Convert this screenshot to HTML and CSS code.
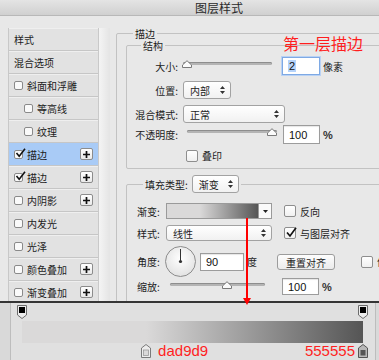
FILE: index.html
```html
<!DOCTYPE html>
<html lang="zh-CN">
<head>
    <meta charset="UTF-8">
    <meta name="viewport" content="width=device-width, initial-scale=1.0">
    <title>图层样式</title>
    <link rel="stylesheet" href="styles.css">
</head>
<body>
<div class="dialog">
    <div class="titlebar">图层样式</div>

    <div class="main">
        <div class="sidebar">
            <ul class="style-list">
                <li class="item">样式</li>
                <li class="item">混合选项</li>
                <li class="item"><span class="box"></span>斜面和浮雕</li>
                <li class="item sub"><span class="box"></span>等高线</li>
                <li class="item sub"><span class="box"></span>纹理</li>
                <li class="item active">
                    <span class="box checked"><svg width="11" height="10" viewBox="0 0 11 10"><polyline points="1.5,5 4.2,8.2 10,0.8" fill="none" stroke="#111" stroke-width="1.6"/></svg></span>描边
                    <span class="plus"><svg width="7" height="7" viewBox="0 0 7 7"><path d="M3.5 0v7M0 3.5h7" stroke="#111" stroke-width="1.7"/></svg></span>
                </li>
                <li class="item">
                    <span class="box checked"><svg width="11" height="10" viewBox="0 0 11 10"><polyline points="1.5,5 4.2,8.2 10,0.8" fill="none" stroke="#111" stroke-width="1.6"/></svg></span>描边
                    <span class="plus"><svg width="7" height="7" viewBox="0 0 7 7"><path d="M3.5 0v7M0 3.5h7" stroke="#111" stroke-width="1.7"/></svg></span>
                </li>
                <li class="item">
                    <span class="box"></span>内阴影
                    <span class="plus"><svg width="7" height="7" viewBox="0 0 7 7"><path d="M3.5 0v7M0 3.5h7" stroke="#111" stroke-width="1.7"/></svg></span>
                </li>
                <li class="item"><span class="box"></span>内发光</li>
                <li class="item"><span class="box"></span>光泽</li>
                <li class="item">
                    <span class="box"></span>颜色叠加
                    <span class="plus"><svg width="7" height="7" viewBox="0 0 7 7"><path d="M3.5 0v7M0 3.5h7" stroke="#111" stroke-width="1.7"/></svg></span>
                </li>
                <li class="item">
                    <span class="box"></span>渐变叠加
                    <span class="plus"><svg width="7" height="7" viewBox="0 0 7 7"><path d="M3.5 0v7M0 3.5h7" stroke="#111" stroke-width="1.7"/></svg></span>
                </li>
            </ul>
            <div class="scroll"></div>
        </div>

        <div class="panel">
            <div class="group group-outer">
                <div class="legend">描边</div>

                <div class="group group-inner">
                    <div class="legend">结构</div>

                    <div class="field">
                        <span class="label">大小:</span>
                        <div class="slider slider-size">
                            <div class="track"></div>
                            <svg class="handle" style="left:0%" width="10" height="8" viewBox="0 0 10 8"><path d="M0.5 7.5V5L5 0.7L9.5 5V7.5Z" fill="#fbfbfb" stroke="#7a7a7a"/></svg>
                        </div>
                        <div class="num num-focus"><span class="sel">2</span></div>
                        <span class="unit">像素</span>
                    </div>

                    <div class="field">
                        <span class="label">位置:</span>
                        <div class="select select-pos">内部
                            <svg width="5" height="8" viewBox="0 0 5 8"><path d="M0 3L2.5 0L5 3ZM0 5L2.5 8L5 5Z" fill="#333"/></svg>
                        </div>
                    </div>

                    <div class="field">
                        <span class="label">混合模式:</span>
                        <div class="select select-blend">正常
                            <svg width="5" height="8" viewBox="0 0 5 8"><path d="M0 3L2.5 0L5 3ZM0 5L2.5 8L5 5Z" fill="#333"/></svg>
                        </div>
                    </div>

                    <div class="field field-opacity">
                        <span class="label">不透明度:</span>
                        <div class="slider slider-opacity">
                            <div class="track"></div>
                            <svg class="handle" style="left:100%" width="10" height="8" viewBox="0 0 10 8"><path d="M0.5 7.5V5L5 0.7L9.5 5V7.5Z" fill="#fbfbfb" stroke="#7a7a7a"/></svg>
                        </div>
                        <div class="num num-opacity">100</div>
                        <span class="unit pct">%</span>
                    </div>

                    <div class="field field-overprint">
                        <span class="label"></span>
                        <span class="check"></span>
                        <span class="check-text">叠印</span>
                    </div>
                </div>

                <div class="group group-fill">
                    <div class="legend legend-fill">
                        <span>填充类型:</span>
                        <div class="select select-fill">渐变
                            <svg width="5" height="8" viewBox="0 0 5 8"><path d="M0 3L2.5 0L5 3ZM0 5L2.5 8L5 5Z" fill="#333"/></svg>
                        </div>
                    </div>

                    <div class="field field-gradient">
                        <span class="label">渐变:</span>
                        <div class="grad-picker">
                            <div class="grad-swatch"></div>
                            <div class="grad-drop"><svg width="5" height="3" viewBox="0 0 5 3"><path d="M0 0H5L2.5 3Z" fill="#222"/></svg></div>
                        </div>
                        <span class="check check-fill"></span>
                        <span class="check-text">反向</span>
                    </div>

                    <div class="field field-style">
                        <span class="label">样式:</span>
                        <div class="select select-style">线性
                            <svg width="5" height="8" viewBox="0 0 5 8"><path d="M0 3L2.5 0L5 3ZM0 5L2.5 8L5 5Z" fill="#333"/></svg>
                        </div>
                        <span class="check check-fill"><svg width="12" height="11" viewBox="0 0 12 11"><polyline points="2,5.5 5,9 11,0.8" fill="none" stroke="#111" stroke-width="1.7"/></svg></span>
                        <span class="check-text">与图层对齐</span>
                    </div>

                    <div class="field field-angle">
                        <span class="label">角度:</span>
                        <svg class="dial" width="31" height="31" viewBox="0 0 31 31">
                            <defs>
                                <radialGradient id="dialFill" cx="50%" cy="40%" r="60%">
                                    <stop offset="0" stop-color="#ffffff"/>
                                    <stop offset="1" stop-color="#e2e2e2"/>
                                </radialGradient>
                            </defs>
                            <circle cx="15.5" cy="15.5" r="15" fill="url(#dialFill)" stroke="#8c8c8c"/>
                            <line x1="15.5" y1="15.5" x2="15.5" y2="3" stroke="#333" stroke-width="1"/>
                            <circle cx="15.5" cy="15.5" r="1.6" fill="#333"/>
                        </svg>
                        <div class="num num-angle">90</div>
                        <span class="unit">度</span>
                        <button type="button" class="btn">重置对齐</button>
                        <span class="check check-dither"></span>
                        <span class="check-text">仿色</span>
                    </div>

                    <div class="field field-scale">
                        <span class="label">缩放:</span>
                        <div class="slider slider-scale">
                            <div class="track"></div>
                            <svg class="handle" style="left:56%" width="10" height="8" viewBox="0 0 10 8"><path d="M0.5 7.5V5L5 0.7L9.5 5V7.5Z" fill="#fbfbfb" stroke="#7a7a7a"/></svg>
                        </div>
                        <div class="num num-scale">100</div>
                        <span class="unit pct">%</span>
                    </div>
                </div>
            </div>
        </div>
    </div>

    <div class="editor">
        <div class="editor-body">
            <div class="stops">
                <svg class="stop" style="left:0%" width="10" height="14" viewBox="0 0 10 14"><path d="M0.5 0.5H9.5V10L5 13.5L0.5 10Z" fill="#ececec" stroke="#6c6c6c"/><rect x="2" y="2" width="6" height="6" fill="#000"/></svg>
                <svg class="stop" style="left:100%" width="10" height="14" viewBox="0 0 10 14"><path d="M0.5 0.5H9.5V10L5 13.5L0.5 10Z" fill="#ececec" stroke="#6c6c6c"/><rect x="2" y="2" width="6" height="6" fill="#000"/></svg>
            </div>
            <div class="grad-bar"></div>
            <div class="stops">
                <div class="color-stop" style="left:36.4%">
                    <svg width="10" height="14" viewBox="0 0 10 14"><path d="M0.5 4L5 0.5L9.5 4V13.5H0.5Z" fill="#ececec" stroke="#7a7a7a"/><rect x="2.5" y="6" width="5" height="5.5" fill="#dad9d9" stroke="#9a9a9a" stroke-width="0.8"/></svg>
                    <span class="hex">dad9d9</span>
                </div>
                <div class="color-stop color-stop-end">
                    <span class="hex">555555</span>
                    <svg width="10" height="14" viewBox="0 0 10 14"><path d="M0.5 4L5 0.5L9.5 4V13.5H0.5Z" fill="#b8b8b8" stroke="#555"/><rect x="2.5" y="6" width="5" height="5.5" fill="#555"/></svg>
                </div>
            </div>
        </div>
    </div>

    <div class="note">第一层描边</div>
    <div class="arrow"></div>
</div>
</body>
</html>
```

FILE: styles.css
```css
body {
    margin: 0;
    width: 379px;
    height: 360px;
    overflow: hidden;
    background: #e8e8e8;
    font-family: "Noto Sans CJK SC", sans-serif;
    font-size: 10px;
    color: #1c1c1c;
}
.dialog {
    position: relative;
    height: 360px;
}
.titlebar {
    height: 15px;
    line-height: 15px;
    padding-left: 195px;
    font-size: 12px;
    color: #2a2a2a;
    background: linear-gradient(#e4e4e4, #d0d0d0);
    border-bottom: 1px solid #b8b8b8;
}
.main {
    display: flex;
    height: 285px;
    overflow: hidden;
}

/* left list of layer styles */
.sidebar {
    display: flex;
    margin: 12px 0 0 8px;
}
.style-list {
    width: 89px;
    margin: 0;
    padding: 0;
    list-style: none;
    border-left: 1px solid #c8c8c8;
}
.item {
    display: flex;
    align-items: center;
    height: 22px;
    padding-left: 5px;
    background: #e2e2e2;
    border-bottom: 1px solid #c6c6c6;
    box-shadow: inset 0 1px 0 #efefef;
    white-space: nowrap;
}
.item.sub {
    padding-left: 15px;
}
.item.active {
    background: #a9cbf6;
    box-shadow: none;
}
.box {
    position: relative;
    width: 7px;
    height: 7px;
    margin-right: 4px;
    border: 1px solid #8a8a8a;
    border-radius: 2px;
    background: #fafafa;
    flex: none;
}
.box svg {
    position: absolute;
    left: 0;
    top: -3px;
}
.plus {
    display: flex;
    align-items: center;
    justify-content: center;
    width: 11px;
    height: 10px;
    margin-left: auto;
    margin-right: 5px;
    border: 1px solid #8c8c8c;
    border-radius: 2px;
    background: linear-gradient(#ffffff, #e9e9e9);
}
.scroll {
    width: 11px;
    border-left: 1px solid #c9c9c9;
    background: linear-gradient(to right, #f4f4f4, #e4e4e4);
}

/* right settings panel */
.panel {
    flex: 1;
    padding: 17px 0 0 6px;
    overflow: hidden;
}
.group {
    position: relative;
    border: 1px solid #c2c2c2;
    border-radius: 2px;
}
.group-outer {
    width: 300px;
    height: 300px;
    padding: 11px 0 0 9px;
    box-sizing: border-box;
}
.group-inner {
    padding: 11px 0 6px 0;
}
.group-fill {
    margin-top: 15px;
    height: 200px;
    padding: 18px 0 0 10px;
}
.legend {
    position: absolute;
    top: -6px;
    left: 16px;
    padding: 0 2px;
    line-height: 11px;
    background: #e8e8e8;
}
.group-inner > .legend {
    left: 14px;
}
.legend-fill {
    display: flex;
    align-items: center;
    top: -10px;
    height: 18px;
}
.field {
    display: flex;
    align-items: center;
    height: 18px;
    white-space: nowrap;
}
.field + .field {
    margin-top: 6px;
}
.group-inner .field.field-opacity {
    margin-top: 2px;
    height: 19px;
}
.group-inner .field.field-overprint {
    margin-top: 5px;
    height: 13px;
}
.label {
    flex: none;
    width: 51px;
    margin-right: 5px;
    text-align: right;
}
.group-fill .label {
    width: 29px;
    margin-right: 0;
    text-align: left;
}
.group-fill .field.field-gradient {
    height: 16px;
}
.group-fill .field.field-style {
    margin-top: 6px;
    height: 16px;
}
.group-fill .field.field-angle {
    margin-top: 5px;
    height: 31px;
}
.group-fill .field.field-scale {
    margin-top: 1px;
    height: 17px;
}

.slider {
    position: relative;
    align-self: flex-start;
    height: 10px;
    margin-top: 3px;
    flex: none;
}
.slider-size {
    width: 89px;
}
.slider-opacity {
    width: 90px;
    margin-left: 4px;
}
.slider-scale {
    width: 95px;
    margin-left: 4px;
    margin-top: 3px;
}
.track {
    height: 3px;
    margin-top: 2px;
    border-radius: 2px;
    background: #b4b4b4;
    box-shadow: inset 0 1px 0 #8d8d8d;
}
.handle {
    position: absolute;
    top: 0;
    margin-left: -1px;
}
.slider-opacity .handle {
    margin-left: -10px;
}

.num {
    display: flex;
    align-items: center;
    height: 18px;
    padding-left: 5px;
    box-sizing: border-box;
    border: 1px solid #9c9c9c;
    background: #fff;
    box-shadow: inset 0 1px 1px rgba(0,0,0,0.1);
    font-family: "Liberation Sans", sans-serif;
    font-size: 11px;
    color: #111;
    flex: none;
}
.num-focus {
    width: 38px;
    margin-left: 10px;
    border-color: #7ea9e4;
    box-shadow: 0 0 0 1px #b9d2f4;
}
.sel {
    background: #b5d3fa;
    padding: 0 1px;
}
.num-opacity {
    width: 37px;
    height: 19px;
    margin-left: 6px;
}
.num-angle {
    width: 44px;
    margin-left: 4px;
}
.num-scale {
    width: 37px;
    height: 17px;
    margin-left: 17px;
}
.unit {
    margin-left: 3px;
}
.pct {
    font-family: "Liberation Sans", sans-serif;
    font-size: 11px;
    font-weight: bold;
    color: #333;
}

.select {
    display: flex;
    align-items: center;
    justify-content: space-between;
    height: 18px;
    padding: 0 5px 0 6px;
    box-sizing: border-box;
    border: 1px solid #a2a2a2;
    border-radius: 3px;
    background: linear-gradient(#ffffff, #f1f1f1);
    flex: none;
}
.select-pos {
    width: 48px;
}
.select-blend {
    width: 102px;
}
.select-fill {
    width: 47px;
    margin-left: 4px;
}
.select-style {
    width: 106px;
    height: 16px;
}

.check {
    position: relative;
    width: 10px;
    height: 10px;
    border: 1px solid #8e8e8e;
    border-radius: 2px;
    background: linear-gradient(#ffffff, #f0f0f0);
    flex: none;
}
.check svg {
    position: absolute;
    left: 0;
    top: -1px;
}
.field-overprint .check {
    margin-left: 3px;
}
.check-fill {
    margin-left: 12px;
}
.check-dither {
    margin-left: 26px;
}
.check-text {
    margin-left: 4px;
}

.grad-picker {
    display: flex;
    width: 106px;
    height: 16px;
    box-sizing: border-box;
    border: 1px solid #9a9a9a;
    flex: none;
}
.grad-swatch {
    flex: 1;
    background: linear-gradient(to right, #dad9d9 36%, #555555 100%);
}
.grad-drop {
    display: flex;
    align-items: center;
    justify-content: center;
    width: 12px;
    border-left: 1px solid #9a9a9a;
    background: #fafafa;
}

.dial {
    margin-left: -1px;
    flex: none;
}
.btn {
    width: 58px;
    height: 16px;
    margin-left: 20px;
    padding: 0;
    border: 1px solid #9c9c9c;
    border-radius: 3px;
    background: linear-gradient(#fdfdfd, #ebebeb);
    font-family: "Noto Sans CJK SC", sans-serif;
    font-size: 10px;
    color: #1c1c1c;
    flex: none;
}

/* gradient editor strip at the bottom */
.editor {
    height: 57px;
    padding: 0 3px 0 10px;
    border-top: 2px solid #353535;
    background: #d9d9d9;
}
.editor-body {
    height: 57px;
    padding: 2px 12px 0 11px;
    box-sizing: border-box;
    border-left: 1px solid #bdbdbd;
    border-right: 1px solid #bdbdbd;
    background: #e0e0e0;
}
.stops {
    position: relative;
    height: 14px;
}
.stop {
    position: absolute;
    top: 0;
    margin-left: -5px;
}
.grad-bar {
    height: 22px;
    margin: 2px 0 1px;
    background: linear-gradient(to right, #dad9d9 36.4%, #555555 100%);
}
.color-stop {
    position: absolute;
    top: 0;
    display: flex;
    align-items: center;
    margin-left: -5px;
    height: 14px;
}
.color-stop-end {
    right: -5px;
}
.hex {
    margin: 0 3px 0 7px;
    font-family: "Liberation Sans", sans-serif;
    font-size: 15px;
    line-height: 14px;
    color: #ff1e1e;
}
.color-stop-end .hex {
    margin: 0 3px 0 0;
}

/* red annotation */
.note {
    position: absolute;
    left: 283px;
    top: 34px;
    font-size: 16px;
    line-height: 18px;
    color: #ff1e1e;
}
.arrow {
    position: absolute;
    left: 246px;
    top: 218px;
    width: 2px;
    height: 80px;
    background: #ff0000;
}
.arrow::after {
    content: "";
    position: absolute;
    left: -3px;
    bottom: -7px;
    border-left: 4px solid transparent;
    border-right: 4px solid transparent;
    border-top: 7px solid #ff0000;
}
```
